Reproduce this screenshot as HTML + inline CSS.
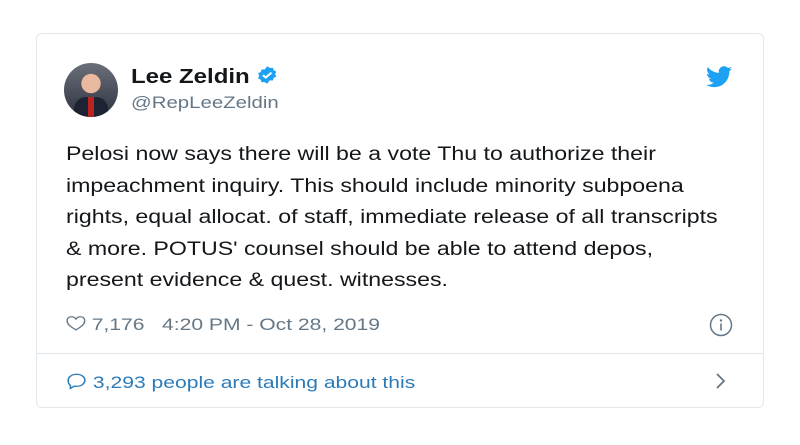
<!DOCTYPE html>
<html><head><style>
body{margin:0;width:800px;height:445px;background:#fff;font-family:"Liberation Sans",Arial,sans-serif;position:relative;overflow:hidden}
.card{position:absolute;left:36px;top:33px;width:728px;height:375px;border:1px solid #e1e8ed;border-radius:6px;box-sizing:border-box}
.av{position:absolute;left:64px;top:63px;width:54px;height:54px;border-radius:50%;background:radial-gradient(circle at 50% 38%,#e9b9a0 0 22%,transparent 23%),linear-gradient(#6b6f7a,#2e3340);overflow:hidden}
.av:after{content:"";position:absolute;left:10px;top:34px;width:34px;height:24px;border-radius:12px 12px 0 0;background:#1d2333}
.av:before{content:"";position:absolute;left:24px;top:34px;width:6px;height:20px;background:#b22;z-index:2}
.s{transform:scaleX(1.2);transform-origin:0 0;white-space:nowrap}
.s2{transform:scaleX(1.24);transform-origin:0 0;white-space:nowrap}
.name{position:absolute;left:131px;top:64px;font-size:20px;font-weight:bold;color:#14171a}
.handle{position:absolute;left:131px;top:93px;font-size:17px;color:#657786}
.txt{position:absolute;left:66px;top:139px;font-size:19.3px;line-height:31.5px;color:#14171a}
.meta{position:absolute;left:66px;top:314px;font-size:17px;color:#657786}
.div{position:absolute;left:37px;top:353px;width:726px;height:1px;background:#e1e8ed}
.talk{position:absolute;left:66px;top:370px;font-size:17px;color:#2b7bb9}
</style></head><body>
<div class="card"></div>
<div class="av"></div>
<div class="name s">Lee Zeldin <svg width="19" height="22" viewBox="0 0 24 24" style="vertical-align:-3px"><path fill="#1da1f2" d="M12 1l2.6 2 3.3-.2.9 3.2 2.8 1.8-1.2 3.1 1.2 3.1-2.8 1.8-.9 3.2-3.3-.2L12 23l-2.6-2-3.3.2-.9-3.2-2.8-1.8L3.6 13 2.4 9.9 5.2 8.1l.9-3.2 3.3.2z"/><path d="M7.5 12.2l3 3 6-6.2" stroke="#fff" stroke-width="2.4" fill="none"/></svg></div>
<div class="handle s">@RepLeeZeldin</div>
<svg style="position:absolute;left:706px;top:66px" width="26" height="22" viewBox="0 0 24 20"><path fill="#1da1f2" d="M24 2.4c-.9.4-1.8.7-2.8.8 1-.6 1.8-1.6 2.2-2.7-1 .6-2 1-3.1 1.2A4.9 4.9 0 0 0 11.9 6.2 14 14 0 0 1 1.7.9a4.9 4.9 0 0 0 1.5 6.6c-.8 0-1.6-.2-2.2-.6 0 2.4 1.7 4.4 3.9 4.8-.7.2-1.5.2-2.2.1.6 2 2.4 3.4 4.6 3.4A9.9 9.9 0 0 1 0 17.2 14 14 0 0 0 7.5 19.4c9.1 0 14-7.5 14-14v-.6c1-.7 1.8-1.6 2.5-2.4z"/></svg>
<div class="txt s">Pelosi now says there will be a vote Thu to authorize their<br>impeachment inquiry. This should include minority subpoena<br>rights, equal allocat. of staff, immediate release of all transcripts<br>&amp; more. POTUS' counsel should be able to attend depos,<br>present evidence &amp; quest. witnesses.</div>
<div class="meta s2"><svg width="16" height="19" viewBox="0 0 24 22" style="vertical-align:-3px"><path d="M12 20.5C5 15.5 1.5 12 1.5 7.5A5.3 5.3 0 0 1 12 5a5.3 5.3 0 0 1 10.5 2.5c0 4.5-3.5 8-10.5 13z" fill="none" stroke="#657786" stroke-width="1.8"/></svg> 7,176&nbsp;&nbsp; 4:20 PM - Oct 28, 2019</div>
<svg style="position:absolute;left:709px;top:313px" width="24" height="24" viewBox="0 0 24 24"><circle cx="12" cy="12" r="10.5" fill="none" stroke="#657786" stroke-width="1.5"/><circle cx="12" cy="7.5" r="1.2" fill="#657786"/><path d="M12 10.5v7" stroke="#657786" stroke-width="1.6"/></svg>
<div class="div"></div>
<div class="talk s2"><svg width="17" height="22" viewBox="0 0 24 24" style="vertical-align:-4px"><path d="M12 2.5c5.2 0 9.5 3.8 9.5 8.5s-4.3 8.5-9.5 8.5c-.9 0-1.7-.1-2.5-.3L5 22.5v-4.3C3.1 16.6 2.5 14 2.5 11 2.5 6.3 6.8 2.5 12 2.5z" fill="none" stroke="#2b7bb9" stroke-width="1.8"/></svg> 3,293 people are talking about this</div>
<svg style="position:absolute;left:714px;top:372px" width="12" height="18" viewBox="0 0 12 18"><path d="M3 2l7 7-7 7" fill="none" stroke="#657786" stroke-width="1.8"/></svg>
</body></html>
